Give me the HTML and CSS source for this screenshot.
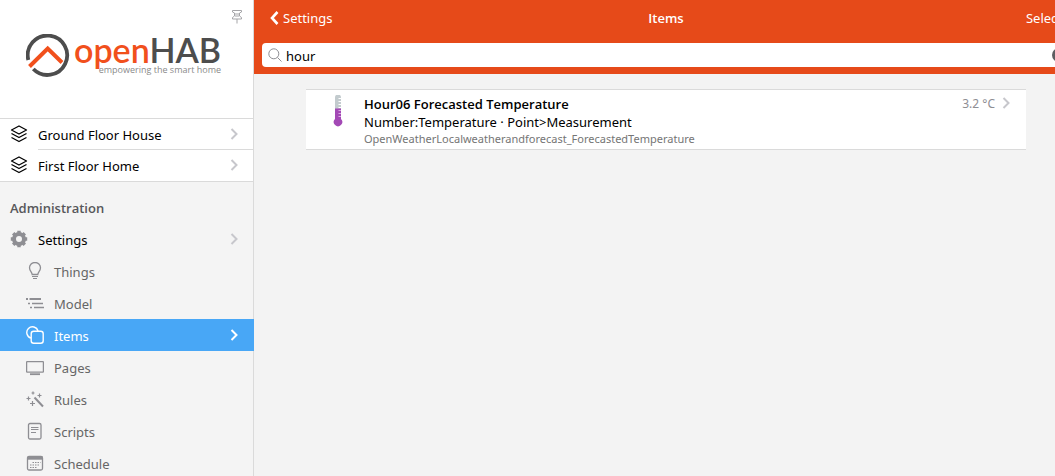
FILE: index.html
```html
<!DOCTYPE html>
<html lang="en">
<head>
    <meta charset="UTF-8">
    <meta name="viewport" content="width=device-width, initial-scale=1.0">
    <title>openHAB - Items</title>
    <link rel="stylesheet" href="styles.css">
</head>
<body>
    <!-- Shared icons -->
    <svg class="defs" aria-hidden="true">
        <symbol id="chevron" viewBox="0 0 8 12">
            <path d="M1.500 1l5 5-5 5" fill="none" stroke="currentColor" stroke-width="2"/>
        </symbol>
        <symbol id="layers" viewBox="0 0 18 18">
            <g fill="none" stroke="currentColor" stroke-width="1.3" stroke-linejoin="round">
                <path d="M9 1l7.500 4L9 9 1.500 5z"/>
                <path d="M1.500 8.500L9 12.500l7.500-4M1.500 12.500L9 16.500l7.500-4"/>
            </g>
        </symbol>
    </svg>

    <div class="app">
        <aside class="sidebar">
            <header class="brand">
                <button class="pin" aria-label="Pin sidebar">
                    <svg width="10" height="14" viewBox="0 0 10 14" fill="none" stroke="currentColor">
                        <path d="M.5.5h9v1.500L7.500 3v3l2 1.500v1.500h-9V7.500l2-1.500V3l-2-1zM5 9v4.500M4 3v4M6 3v4"/>
                    </svg>
                </button>
                <a class="logo" href="#">
                    <svg width="44" height="44" viewBox="0 0 44 44" fill="none">
                        <path d="M2.300 26A19.700 19.700 0 1 1 7.300 35" stroke="#4d4d4d" stroke-width="3.800"/>
                        <path d="M3.500 32.500L21.700 14.500 36 28.500" stroke="#f1501c" stroke-width="4"/>
                    </svg>
                    <span class="wordmark">
                        <span class="name"><span class="open">open</span>HAB</span>
                        <span class="tagline">empowering the smart home</span>
                    </span>
                </a>
            </header>

            <nav>
                <ul class="menu pages">
                    <li><a href="#"><svg class="icon"><use href="#layers"/></svg><span class="label">Ground Floor House</span><svg class="chevron"><use href="#chevron"/></svg></a></li>
                    <li><a href="#"><svg class="icon"><use href="#layers"/></svg><span class="label">First Floor Home</span><svg class="chevron"><use href="#chevron"/></svg></a></li>
                </ul>

                <h2>Administration</h2>
                <ul class="menu">
                    <li>
                        <a href="#">
                            <svg class="icon gear" viewBox="0 0 18 18">
                                <circle cx="9" cy="9" r="5" fill="none" stroke="currentColor" stroke-width="4"/>
                                <path d="M9 .8v3M9 14.200v3M.8 9h3M14.200 9h3M3.200 3.200l2 2M12.800 12.800l2 2M3.200 14.800l2-2M12.800 5.200l2-2" stroke="currentColor" stroke-width="3.400"/>
                            </svg>
                            <span class="label">Settings</span>
                            <svg class="chevron"><use href="#chevron"/></svg>
                        </a>
                    </li>
                </ul>
                <ul class="menu sub">
                    <li>
                        <a href="#">
                            <svg class="icon" viewBox="0 0 18 18" fill="none" stroke="currentColor">
                                <path d="M6.200 12.500C6 10 3.500 9 3.500 5.800a5.500 5.300 0 0 1 11 0C14.500 9 12 10 11.800 12.500z" stroke-width="1.300"/>
                                <path d="M6 14.500h6M7 16.500h4"/>
                            </svg>
                            <span class="label">Things</span>
                        </a>
                    </li>
                    <li>
                        <a href="#">
                            <svg class="icon" viewBox="0 0 18 18" fill="none" stroke="currentColor">
                                <path d="M0 5h2M3.500 5H15" stroke-width="2"/>
                                <path d="M2 9.500h2M6 9.500h11M4 13.500h2M8 13.500h10" stroke-width="1.300"/>
                            </svg>
                            <span class="label">Model</span>
                        </a>
                    </li>
                    <li class="active">
                        <a href="#" aria-current="page">
                            <svg class="icon" viewBox="0 0 18 18" fill="none" stroke="currentColor" stroke-width="1.400">
                                <path d="M5 12A5.700 5.700 0 1 1 12 5"/>
                                <rect x="5.200" y="5.200" width="12" height="12" rx="2.500"/>
                            </svg>
                            <span class="label">Items</span>
                            <svg class="chevron"><use href="#chevron"/></svg>
                        </a>
                    </li>
                    <li>
                        <a href="#">
                            <svg class="icon" viewBox="0 0 18 18" fill="none" stroke="currentColor">
                                <rect x=".6" y="3.600" width="16.800" height="10.500" rx=".5" stroke-width="1.300"/>
                                <path d="M4 16.200h10" stroke-width="1.800"/>
                            </svg>
                            <span class="label">Pages</span>
                        </a>
                    </li>
                    <li>
                        <a href="#">
                            <svg class="icon" viewBox="0 0 18 18" fill="none" stroke="currentColor">
                                <path d="M8.500 7.500l8.500 9" stroke-width="2"/>
                                <path d="M7 1.500v3M5.500 3h3M13.500 3.500v4M11.500 5.500h4M2.500 6.500v4M.5 8.500h4M6.500 11v5M4 13.500h5" stroke-width="1.200"/>
                            </svg>
                            <span class="label">Rules</span>
                        </a>
                    </li>
                    <li>
                        <a href="#">
                            <svg class="icon" viewBox="0 0 18 18" fill="none" stroke="currentColor">
                                <rect x="2.500" y="1.500" width="12.500" height="15.500" rx="1.500" stroke-width="1.300"/>
                                <path d="M5 5.500h7.500M5 7.500h7.500M5 10.500h5"/>
                            </svg>
                            <span class="label">Scripts</span>
                        </a>
                    </li>
                    <li>
                        <a href="#">
                            <svg class="icon" viewBox="0 0 18 18" fill="none" stroke="currentColor">
                                <rect x="1.500" y="2.500" width="15" height="13.500" rx="1.500" stroke-width="1.300"/>
                                <path d="M1.500 4h15" stroke-width="3.400"/>
                                <path d="M6.500 8.500h8M4 11h10M4 13.500h7" stroke-dasharray="1.500 1"/>
                            </svg>
                            <span class="label">Schedule</span>
                        </a>
                    </li>
                </ul>
            </nav>
        </aside>

        <main class="view">
            <header class="navbar">
                <div class="bar">
                    <a class="back" href="#">
                        <svg width="9" height="14" viewBox="0 0 9 14"><path d="M7.500 1L2 7l5.500 6" fill="none" stroke="#fff" stroke-width="2.600"/></svg>
                        <span>Settings</span>
                    </a>
                    <h1>Items</h1>
                    <button class="select">Select</button>
                </div>
                <form class="search">
                    <svg width="14" height="14" viewBox="0 0 14 14" fill="none" stroke="#8e8e93"><circle cx="5.800" cy="5.800" r="5"/><path d="M9.500 9.500l4 4"/></svg>
                    <input type="text" value="hour" aria-label="Search items">
                    <button class="clear" type="button" aria-label="Clear search">
                        <svg width="14" height="14" viewBox="0 0 14 14"><circle cx="7" cy="7" r="7" fill="#5e5e62"/><path d="M4.500 4.500l5 5M9.500 4.500l-5 5" stroke="#fff" stroke-width="1.500"/></svg>
                    </button>
                </form>
            </header>

            <ul class="items">
                <li>
                    <a class="item" href="#">
                        <svg class="thermometer" width="32" height="32" viewBox="0 0 32 32">
                            <path d="M13 14V2.500a3 3 0 0 1 6 0V14z" fill="#c3cbce"/>
                            <path d="M13 13.500h6v10.500a4.200 4.200 0 1 1-6 0z" fill="#a349b5"/>
                            <path d="M16.500 3.500H19M16.500 6.500H19M16.500 9.500H19M16.500 12.500H19" stroke="#fff"/>
                            <path d="M16.500 15.500H19M16.500 18.500H19M16.500 21.500H19" stroke="#d9a8e2"/>
                        </svg>
                        <span class="text">
                            <strong>Hour06 Forecasted Temperature</strong>
                            <span class="type">Number:Temperature · Point&gt;Measurement</span>
                            <small>OpenWeatherLocalweatherandforecast_ForecastedTemperature</small>
                        </span>
                        <span class="state">3.2 °C</span>
                        <svg class="chevron"><use href="#chevron"/></svg>
                    </a>
                </li>
            </ul>
        </main>
    </div>
</body>
</html>
```
FILE: styles.css
```css
* {
    box-sizing: border-box;
}

body {
    margin: 0;
    font-family: "Noto Sans", "Open Sans", sans-serif;
    font-size: 13px;
    line-height: 18px;
    color: #000;
    background-color: #f3f3f3;
}

a {
    color: inherit;
    text-decoration: none;
}

button {
    padding: 0;
    border: none;
    background: none;
    font: inherit;
    color: inherit;
    cursor: pointer;
}

ul {
    list-style: none;
    margin: 0;
    padding: 0;
}

svg {
    display: block;
    flex: none;
}

.defs {
    position: absolute;
    width: 0;
    height: 0;
}

.app {
    display: flex;
    height: 100vh;
    overflow: hidden;
}

/* Sidebar */
.sidebar {
    flex: none;
    width: 254px;
    background-color: #f4f4f4;
    border-right: 1px solid #dadada;
}

.brand {
    position: relative;
    padding: 34px 26px 41px;
    background-color: #fff;
}

.pin {
    position: absolute;
    top: 10px;
    right: 11px;
    color: #a5a5a8;
}

.logo {
    display: flex;
    gap: 4px;
    height: 43px;
}

.wordmark {
    display: flex;
    flex-direction: column;
    white-space: nowrap;
}

.name {
    font-family: Lato, sans-serif;
    font-size: 34px;
    font-weight: 600;
    line-height: 32px;
    color: #4d4d4d;
}

.open {
    color: #f1501c;
}

.tagline {
    align-self: flex-end;
    font-family: "Open Sans", sans-serif;
    font-size: 9px;
    line-height: 8px;
    color: #8a8a8a;
}

.menu a {
    display: flex;
    align-items: center;
    height: 32px;
    padding: 0 15px 0 10px;
}

.icon {
    width: 18px;
    height: 18px;
    margin-right: 10px;
}

.label {
    flex: 1;
    padding-top: 2px;
}

.chevron {
    width: 8px;
    height: 12px;
    color: #c7c7cc;
}

.pages {
    background-color: #fff;
    border-top: 1px solid #dadada;
    border-bottom: 1px solid #dadada;
}

.pages li:first-child a {
    height: 30px;
}

.pages li + li {
    background: linear-gradient(#dadada, #dadada) 38px 0 / 100% 1px no-repeat;
}

.sidebar h2 {
    margin: 0;
    padding: 17px 10px 6px;
    font-family: "Open Sans", sans-serif;
    font-size: 13px;
    font-weight: 600;
    line-height: 18px;
    color: #57575a;
}

.gear {
    color: #8e8e93;
}

.sub a {
    padding-left: 26px;
    color: #666;
}

.sub .icon {
    color: #8e8e93;
}

/* The highlighted row covers the sidebar border */
.sub .active a {
    margin-right: -1px;
    padding-right: 16px;
    background-color: #48a7f6;
    color: #fff;
}

.sub .active svg {
    color: #fff;
}

/* Main view, runs past the right edge of the window */
.view {
    flex: 1;
    min-width: 0;
    margin-right: -23px;
}

.navbar {
    height: 74px;
    padding: 0 8px;
    background-color: #e64a19;
    color: #fff;
}

.bar {
    display: grid;
    grid-template-columns: 1fr auto 1fr;
    align-items: center;
    height: 43px;
    padding: 0 8px;
}

.bar > * {
    padding-bottom: 7px;
}

.back {
    display: flex;
    align-items: center;
    gap: 4px;
}

.bar h1 {
    margin: 0;
    font-family: "Open Sans", sans-serif;
    font-size: 13px;
    font-weight: 600;
    line-height: 18px;
}

.select {
    justify-self: end;
}

.search {
    display: flex;
    align-items: center;
    gap: 4px;
    height: 24px;
    padding: 0 4px 0 6px;
    border-radius: 4px;
    background-color: #fff;
}

.search input {
    flex: 1;
    min-width: 0;
    padding: 2px 0 0;
    border: none;
    outline: none;
    background: none;
    font: inherit;
    color: #000;
}

.items {
    max-width: 720px;
    margin: 15px auto 0;
    background-color: #fff;
    border-top: 1px solid #dadada;
    border-bottom: 1px solid #dadada;
}

.item {
    display: flex;
    align-items: flex-start;
    padding: 5px 16px 3px;
}

.thermometer {
    margin-right: 10px;
}

.text {
    flex: 1;
    display: flex;
    flex-direction: column;
}

.text strong {
    font-family: "Open Sans", sans-serif;
    font-weight: 600;
}

.text small {
    font-size: 11px;
    line-height: 15px;
    color: #757575;
}

.state {
    margin-right: 7px;
    font-size: 12px;
    color: #8e8e93;
}

.item .chevron {
    margin-top: 2px;
}
```
